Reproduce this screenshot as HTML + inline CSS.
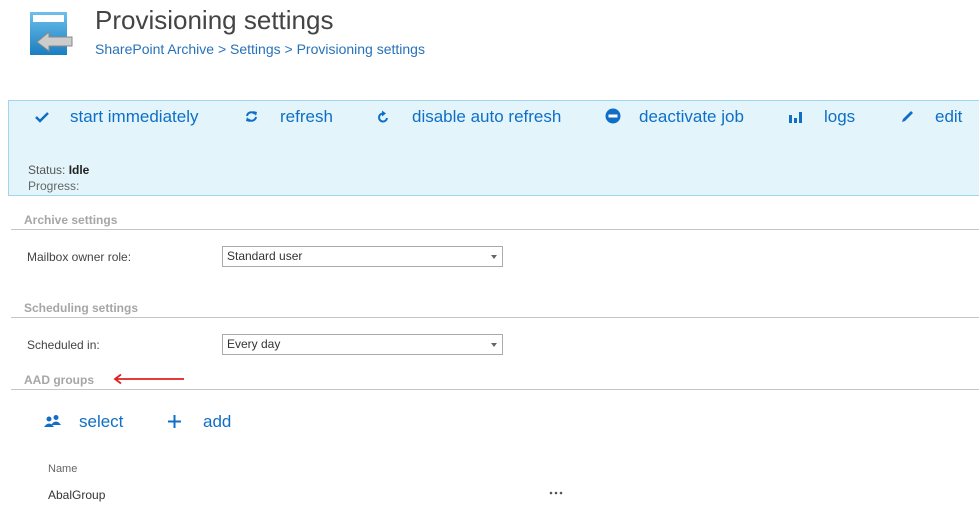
<!DOCTYPE html>
<html><head><style>
body{margin:0;width:979px;height:525px;background:#fff;font-family:"Liberation Sans",sans-serif;position:relative;overflow:hidden;color:#444}
.a{position:absolute;white-space:nowrap}
.t{color:#0f6fc6;font-size:17px}
.ic{color:#0f6fc6}
.h{font-size:12px;font-weight:bold;color:#a6a6a6}
.line{position:absolute;left:11px;right:0;height:1px;background:#c6c6c6}
.lbl{font-size:12px;color:#444}
.sel{position:absolute;left:222px;border:1px solid #ababab;font-size:12px;color:#333;line-height:19px;padding-left:4px;box-sizing:border-box;width:281px;height:21px}
.sel:after{content:"";position:absolute;right:5px;top:8px;border:3.5px solid transparent;border-top:4px solid #666}
</style></head><body>
<svg class="a" style="left:28px;top:10px" width="48" height="48" viewBox="28 10 48 48">
<defs><linearGradient id="g" x1="0" y1="0" x2="0" y2="1"><stop offset="0" stop-color="#6cc0ec"/><stop offset="1" stop-color="#1a7ec0"/></linearGradient></defs>
<rect x="30" y="12" width="37" height="43" fill="url(#g)"/>
<rect x="33" y="15" width="31" height="7" fill="#fff"/>
<path d="M37 42 L49 32 L49 37 L72 37 L72 46 L49 46 L49 51 Z" fill="#ccc" stroke="#888" stroke-width="1"/>
</svg>
<div class="a" style="left:95px;top:5px;font-size:26px;color:#444">Provisioning settings</div>
<div class="a" style="left:95px;top:41px;font-size:14px;color:#2672ba">SharePoint Archive &gt; Settings &gt; Provisioning settings</div>

<div class="a" style="left:8px;top:100px;width:980px;height:96px;background:#e3f5fb;border:1px solid #9fd6ee;box-sizing:border-box"></div>
<svg class="a" style="left:35px;top:111px" width="14" height="12"><path d="M1 6 L5 10 L13 2" stroke="#0f6fc6" stroke-width="2.5" fill="none"/></svg>
<div class="a t" style="left:70px;top:107px">start immediately</div>
<svg class="a" style="left:245px;top:110px" width="13" height="13"><path d="M2 6 A4.5 4.5 0 0 1 10 4 M11 7 A4.5 4.5 0 0 1 3 9" stroke="#0f6fc6" stroke-width="2" fill="none"/><path d="M8 1 L12 2 L11 6Z M5 12 L1 11 L2 7Z" fill="#0f6fc6"/></svg>
<div class="a t" style="left:280px;top:107px">refresh</div>
<svg class="a" style="left:377px;top:110px" width="12" height="13"><path d="M10 8 A4 4 0 1 1 6 3.5" stroke="#0f6fc6" stroke-width="2" fill="none"/><path d="M5 0.5 L9 3.5 L5 6.5Z" fill="#0f6fc6"/></svg>
<div class="a t" style="left:412px;top:107px">disable auto refresh</div>
<svg class="a" style="left:605px;top:108px" width="16" height="16"><circle cx="8" cy="8" r="7.5" fill="#0f6fc6"/><rect x="3.5" y="6.5" width="9" height="3" fill="#fff"/></svg>
<div class="a t" style="left:639px;top:107px">deactivate job</div>
<svg class="a" style="left:789px;top:110px" width="14" height="13"><rect x="0" y="5" width="3" height="8" fill="#0f6fc6"/><rect x="5" y="8" width="3" height="5" fill="#0f6fc6"/><rect x="10" y="2" width="3" height="11" fill="#0f6fc6"/></svg>
<div class="a t" style="left:824px;top:107px">logs</div>
<svg class="a" style="left:900px;top:109px" width="15" height="15"><path d="M2 13 L3 10 L11 2 L13 4 L5 12 Z" fill="#0f6fc6"/></svg>
<div class="a t" style="left:935px;top:107px">edit</div>
<div class="a" style="left:28px;top:163px;font-size:12px;color:#555">Status: <b style="color:#222">Idle</b></div>
<div class="a" style="left:28px;top:179px;font-size:12px;color:#666">Progress:</div>

<div class="a h" style="left:24px;top:213px">Archive settings</div>
<div class="line" style="top:229px"></div>
<div class="a lbl" style="left:27px;top:250px">Mailbox owner role:</div>
<div class="sel" style="top:246px">Standard user</div>

<div class="a h" style="left:24px;top:301px">Scheduling settings</div>
<div class="line" style="top:317px"></div>
<div class="a lbl" style="left:27px;top:338px">Scheduled in:</div>
<div class="sel" style="top:334px">Every day</div>

<div class="a h" style="left:24px;top:373px">AAD groups</div>
<svg class="a" style="left:112px;top:373px" width="75" height="12"><path d="M72 6 L4 6 M9 1.5 L3 6 L9 10.5" stroke="#e02020" stroke-width="1.8" fill="none"/></svg>
<div class="line" style="top:389px"></div>
<svg class="a" style="left:44px;top:414px" width="18" height="14"><circle cx="5" cy="5" r="2.5" fill="#0f6fc6"/><path d="M0 13 Q5 6 10 13Z" fill="#0f6fc6"/><circle cx="12" cy="3.5" r="2.5" fill="#0f6fc6"/><path d="M7 11 Q12 4 17 11Z" fill="#0f6fc6"/></svg>
<div class="a t" style="left:79px;top:412px">select</div>
<svg class="a" style="left:167px;top:414px" width="15" height="15"><path d="M7.5 1 V14 M1 7.5 H14" stroke="#0f6fc6" stroke-width="2"/></svg>
<div class="a t" style="left:203px;top:412px">add</div>
<div class="a" style="left:48px;top:463px;font-size:11px;color:#666">Name</div>
<div class="a" style="left:48px;top:488px;font-size:12px;color:#333">AbalGroup</div>
<svg class="a" style="left:549px;top:491px" width="15" height="4"><circle cx="2" cy="2" r="1.3" fill="#555"/><circle cx="7" cy="2" r="1.3" fill="#555"/><circle cx="12" cy="2" r="1.3" fill="#555"/></svg>
</body></html>
